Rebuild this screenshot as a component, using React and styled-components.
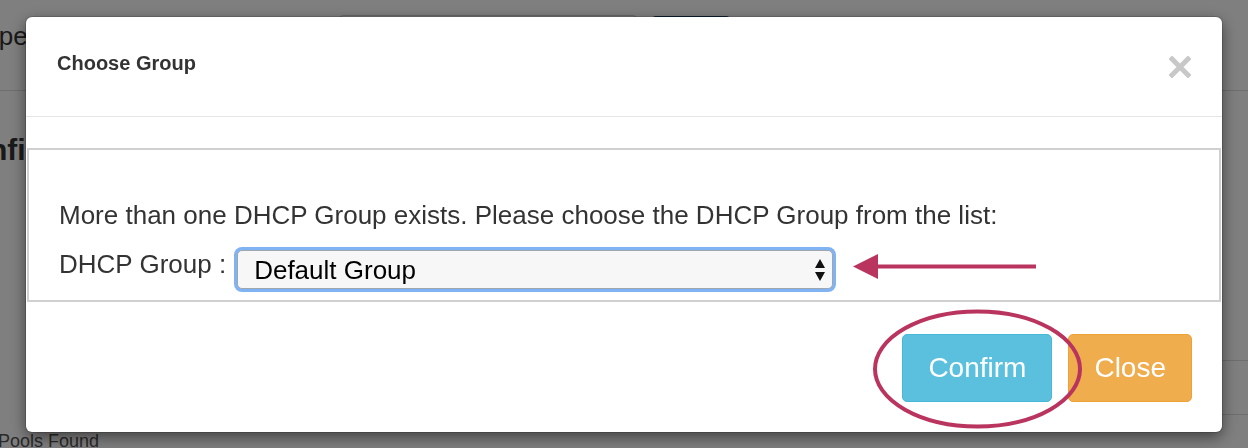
import React from 'react';
import styled, { createGlobalStyle } from 'styled-components';

const GlobalStyle = createGlobalStyle`
  * {
    box-sizing: border-box;
  }
  body {
    margin: 0;
    background: #fff;
    font-family: 'Liberation Sans', Arial, Helvetica, sans-serif;
    color: #333;
    overflow: hidden;
  }
`;

const App = () => {
  return (
    <>
      <GlobalStyle />
      <Page>
        <TopBar>
          <PageTitle>Scopes</PageTitle>
          <Search placeholder="Search" />
          <SearchButton>Go</SearchButton>
        </TopBar>
        <SectionTitle>Configuration</SectionTitle>
        <Table>
          <Row />
          <Row />
        </Table>
        <Summary>0 Pools Found</Summary>
      </Page>

      <Backdrop>
        <Modal>
          <Header>
            <Title>Choose Group</Title>
            <CloseX aria-label="Close">
              <svg width="22" height="22" viewBox="0 0 22 22">
                <path d="M3 3 L19 19 M19 3 L3 19" stroke="#c8c8c8" strokeWidth="5" strokeLinecap="square" />
              </svg>
            </CloseX>
          </Header>

          <Body>
            <GroupBox>
              <Prompt>More than one DHCP Group exists. Please choose the DHCP Group from the list:</Prompt>
              <FieldRow>
                <Label htmlFor="dhcp-group">DHCP Group :</Label>
                <SelectWrap>
                  <Select id="dhcp-group" defaultValue="default">
                    <option value="default">Default Group</option>
                  </Select>
                  <Caret width="12" height="24" viewBox="0 0 12 24">
                    <path d="M6 1 L11 10 L1 10 Z M1 14 L11 14 L6 23 Z" fill="#111" />
                  </Caret>
                </SelectWrap>
              </FieldRow>
            </GroupBox>
          </Body>

          <Footer>
            <Button $tone="info">Confirm</Button>
            <Button $tone="warning">Close</Button>
          </Footer>

          <PointerArrow width="190" height="30" viewBox="0 0 190 30">
            <line x1="24" y1="14.5" x2="186" y2="14.5" stroke="#b9345e" strokeWidth="4" />
            <polygon points="3,14.5 28,2 28,27" fill="#b9345e" />
          </PointerArrow>
          <Highlight width="214" height="124" viewBox="0 0 214 124">
            <ellipse cx="106.5" cy="62" rx="102.5" ry="57.5" fill="none" stroke="#b9345e" strokeWidth="4" />
          </Highlight>
        </Modal>
      </Backdrop>
    </>
  );
};

const Page = styled.div`
  width: 1248px;
  height: 448px;
  display: flex;
  flex-direction: column;
  overflow: hidden;

  & > * {
    flex-shrink: 0;
  }
`;

const TopBar = styled.header`
  height: 91px;
  display: flex;
  align-items: flex-start;
  border-bottom: 1px solid #dcdcdc;
`;

const PageTitle = styled.h1`
  flex: none;
  width: 385px;
  margin: 22px 0 0 -46px;
  font-size: 26px;
  line-height: 29px;
  font-weight: 400;
  color: #333;
  white-space: nowrap;
`;

const Search = styled.input`
  margin-top: 15px;
  width: 298px;
  height: 34px;
  border: 1px solid #ccc;
  border-radius: 4px;
  font-size: 14px;
`;

const SearchButton = styled.button`
  margin: 16px 0 0 15px;
  width: 78px;
  height: 34px;
  border: none;
  border-radius: 4px;
  background: #1b3f66;
  color: #fff;
`;

const SectionTitle = styled.h2`
  margin: 42px 0 0 -51px;
  font-size: 30px;
  line-height: 33px;
  font-weight: 700;
  color: #333;
  white-space: nowrap;
`;

const Table = styled.div`
  margin: 141px 0 0 100px;
`;

const Row = styled.div`
  height: 54px;
  border-bottom: 1px solid #dcdcdc;
`;

const Summary = styled.p`
  margin: 16px 0 0 -17px;
  font-size: 18px;
  line-height: 21px;
  color: #555;
  white-space: nowrap;
`;

const Backdrop = styled.div`
  position: fixed;
  inset: 0;
  padding: 17px 26px;
  background: rgba(0, 0, 0, 0.5);
`;

const Modal = styled.div`
  position: relative;
  background: #fff;
  border-radius: 6px;
  box-shadow: 0 5px 15px rgba(0, 0, 0, 0.5), 0 0 0 1px rgba(0, 0, 0, 0.15);
`;

const Header = styled.div`
  height: 100px;
  padding: 35px 31px 0;
  display: flex;
  justify-content: space-between;
  align-items: flex-start;
  border-bottom: 1px solid #e5e5e5;
`;

const Title = styled.h4`
  margin: 0;
  font-size: 20px;
  line-height: 22px;
  font-weight: 700;
  color: #333;
`;

const CloseX = styled.button`
  margin-top: 4px;
  padding: 0;
  width: 22px;
  height: 22px;
  border: none;
  background: none;
  display: flex;
`;

const Body = styled.div`
  padding-top: 31px;
`;

const GroupBox = styled.div`
  margin: 0 1px;
  height: 154px;
  padding: 47px 30px 0;
  border: 2px solid #d0d0d0;
`;

const Prompt = styled.p`
  margin: 0;
  font-size: 26px;
  line-height: 36px;
  color: #333;
`;

const FieldRow = styled.div`
  margin-top: 13px;
  display: flex;
  align-items: flex-start;
`;

const Label = styled.label`
  font-size: 26px;
  line-height: 36px;
  color: #333;
`;

const SelectWrap = styled.div`
  position: relative;
  margin: 4px 0 0 11px;
  width: 596px;
  height: 39px;
`;

const Select = styled.select`
  appearance: none;
  width: 100%;
  height: 100%;
  padding: 0 40px 0 16px;
  border: 1px solid #9fa6ae;
  border-radius: 5px;
  background: #f7f7f7;
  font-family: 'Liberation Sans', Arial, sans-serif;
  font-size: 26px;
  color: #000;
  box-shadow: 0 0 0 3px #80b3f4;
  outline: none;
`;

const Caret = styled.svg`
  position: absolute;
  right: 7px;
  top: 8px;
  pointer-events: none;
`;

const Footer = styled.div`
  padding: 32px 30px 30px 0;
  display: flex;
  justify-content: flex-end;
  gap: 16px;
`;

const tones = {
  info: { bg: '#5bc0de', border: '#46b8da' },
  warning: { bg: '#f0ad4e', border: '#eea236' },
};

const Button = styled.button`
  height: 68px;
  padding: 0 25px;
  border: 1px solid ${({ $tone }) => tones[$tone].border};
  border-radius: 5px;
  background: ${({ $tone }) => tones[$tone].bg};
  color: #fff;
  font-family: 'Liberation Sans', Arial, sans-serif;
  font-size: 28px;
  cursor: pointer;
`;

const PointerArrow = styled.svg`
  position: absolute;
  left: 824px;
  top: 235px;
`;

const Highlight = styled.svg`
  position: absolute;
  left: 845px;
  top: 290px;
`;

export default App;
